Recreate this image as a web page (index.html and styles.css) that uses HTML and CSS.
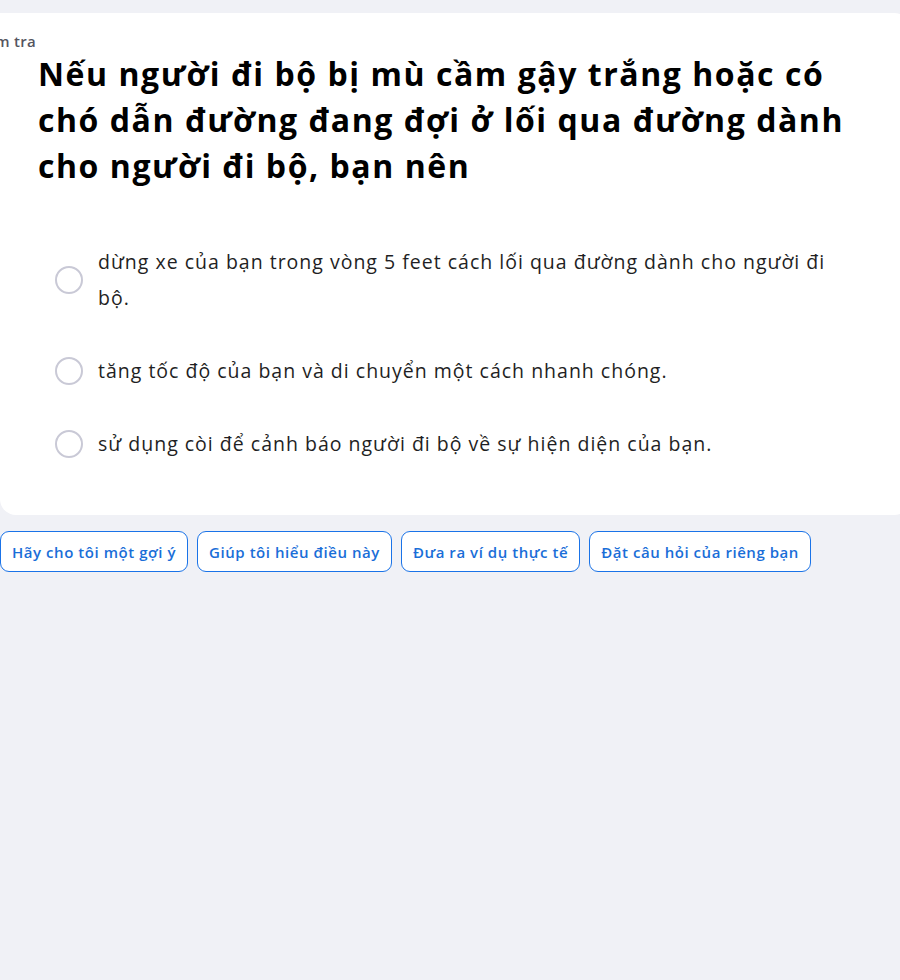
FILE: index.html
```html
<!DOCTYPE html>
<html lang="vi">
<head>
<meta charset="utf-8">
<link rel="stylesheet" href="styles.css">
</head>
<body>
<div class="page">
  <section class="card">
    <div class="label">Kiểm tra</div>
    <h1 class="question">Nếu người đi bộ bị mù cầm gậy trắng hoặc có chó dẫn đường đang đợi ở lối qua đường dành cho người đi bộ, bạn nên</h1>
    <ul class="options">
      <li class="option"><span class="radio"></span><span class="opt-text">dừng xe của bạn trong vòng 5 feet cách lối qua đường dành cho người đi bộ.</span></li>
      <li class="option"><span class="radio"></span><span class="opt-text">tăng tốc độ của bạn và di chuyển một cách nhanh chóng.</span></li>
      <li class="option"><span class="radio"></span><span class="opt-text">sử dụng còi để cảnh báo người đi bộ về sự hiện diện của bạn.</span></li>
    </ul>
  </section>
  <div class="actions">
    <button class="chip">Hãy cho tôi một gợi ý</button>
    <button class="chip">Giúp tôi hiểu điều này</button>
    <button class="chip">Đưa ra ví dụ thực tế</button>
    <button class="chip">Đặt câu hỏi của riêng bạn</button>
  </div>
</div>
</body>
</html>
```
FILE: styles.css
```css
html, body {
  margin: 0;
  padding: 0;
  background: #f0f1f6;
  font-family: "Open Sans", "Inter", sans-serif;
  overflow: hidden;
}
.page {
  width: 900px;
  height: 980px;
  padding-top: 13px;
  box-sizing: border-box;
}
.card {
  background: #fff;
  border-radius: 0 16px 16px 16px;
  width: 910px;
  height: 502px;
  box-sizing: border-box;
  padding: 18px 0 0 38px;
}
.label {
  margin-left: -38px;
  font-size: 15px;
  font-weight: 600;
  color: #55555f;
  line-height: 20px;
  text-indent: -28px;
  letter-spacing: 0.3px;
}
.question {
  margin: 0;
  font-size: 32px;
  font-weight: 700;
  line-height: 46px;
  color: #000;
  width: 840px;
  letter-spacing: 1.55px;
}
.options {
  list-style: none;
  margin: 55px 0 0 0;
  padding: 0 0 0 17px;
}
.option {
  display: flex;
  align-items: center;
  gap: 15px;
  margin-bottom: 37px;
}
.radio {
  flex: none;
  width: 24px;
  height: 24px;
  border: 2px solid #c9c9d6;
  border-radius: 50%;
}
.opt-text {
  font-size: 19.5px;
  line-height: 36px;
  color: #1f1f24;
  width: 745px;
  letter-spacing: 1px;
}
.actions {
  display: flex;
  gap: 9px;
  margin-top: 16px;
}
.chip {
  height: 41px;
  padding: 0 11px;
  border: 1px solid #1a73e8;
  border-radius: 9px;
  background: #fff;
  color: #1a6ed8;
  font-family: "Open Sans", "Inter", sans-serif;
  font-size: 15px;
  font-weight: 600;
  letter-spacing: 0.55px;
}
```
